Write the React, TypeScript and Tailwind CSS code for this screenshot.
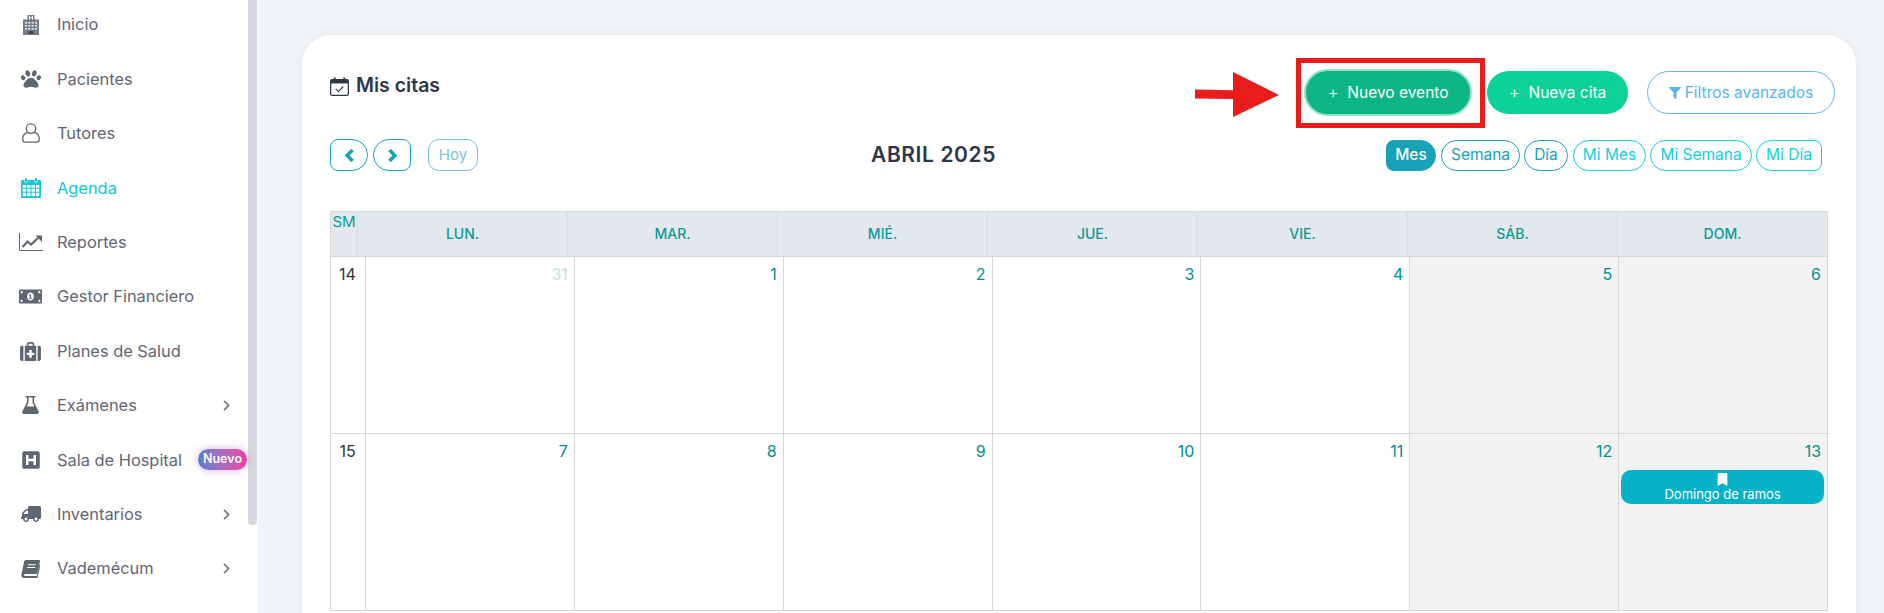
import React from 'react';
import {
  FaPaw,
  FaMoneyBillAlt,
  FaHSquare,
  FaTruck,
  FaFilter,
  FaBookmark,
} from 'react-icons/fa';
import { LuChevronRight } from 'react-icons/lu';

const gray = '#5f6673';

const HospitalIcon = () => (
  <svg viewBox="0 0 16 20" className="w-[16px] h-[20px]" fill="#757c87">
    <path d="M4.5 0h7v4.5H16V20H0V4.5h4.5z" />
    <path d="M6 1h1v1.2h2V1h1v3.4H9V3.2H7v1.2H6z" fill="#fff" />
    <g fill="#e8e9eb">
      <rect x="2" y="7" width="2" height="1.6" />
      <rect x="5.2" y="7" width="2" height="1.6" />
      <rect x="8.6" y="7" width="2" height="1.6" />
      <rect x="12" y="7" width="2" height="1.6" />
      <rect x="2" y="10" width="2" height="1.6" />
      <rect x="5.2" y="10" width="2" height="1.6" />
      <rect x="8.6" y="10" width="2" height="1.6" />
      <rect x="12" y="10" width="2" height="1.6" />
      <rect x="2" y="13" width="2" height="1.6" />
      <rect x="5.2" y="13" width="2" height="1.6" />
      <rect x="8.6" y="13" width="2" height="1.6" />
      <rect x="12" y="13" width="2" height="1.6" />
    </g>
    <rect x="5.5" y="16" width="5" height="3" fill="#3f4652" />
  </svg>
);

const UserIcon = () => (
  <svg viewBox="0 0 18 20" className="w-[18px] h-[20px]" fill="none" stroke={gray} strokeWidth="1.3">
    <circle cx="9" cy="5.6" r="4.7" />
    <path d="M5.6 9.4C2.6 10.4.8 12.6.8 15.6v1.2c0 1.3 1 2.4 2.4 2.4h11.6c1.4 0 2.4-1.1 2.4-2.4v-1.2c0-3-1.8-5.2-4.8-6.2" />
  </svg>
);

const AgendaIcon = () => (
  <svg viewBox="0 0 20 20" className="w-[20px] h-[20px]" fill="#12c6d6">
    <path d="M1.5 2H3.5V4.5h3V2h7v2.5h3V2h2c.8 0 1.5.7 1.5 1.5v15c0 .8-.7 1.5-1.5 1.5h-17C.7 20 0 19.3 0 18.5v-15C0 2.7.7 2 1.5 2z" />
    <path d="M4 .3h2v3.5H4zM14 .3h2v3.5h-2z" />
    <g fill="#fff">
      <rect x="1.7" y="7" width="3.3" height="2.8" />
      <rect x="5.9" y="7" width="3.6" height="2.8" />
      <rect x="10.5" y="7" width="3.6" height="2.8" />
      <rect x="15" y="7" width="3.3" height="2.8" />
      <rect x="1.7" y="10.7" width="3.3" height="3" />
      <rect x="5.9" y="10.7" width="3.6" height="3" />
      <rect x="10.5" y="10.7" width="3.6" height="3" />
      <rect x="15" y="10.7" width="3.3" height="3" />
      <rect x="1.7" y="14.7" width="3.3" height="3.5" />
      <rect x="5.9" y="14.7" width="3.6" height="3.5" />
      <rect x="10.5" y="14.7" width="3.6" height="3.5" />
      <rect x="15" y="14.7" width="3.3" height="3.5" />
    </g>
  </svg>
);

const ChartIcon = () => (
  <svg viewBox="0 0 24 18" className="w-[24px] h-[18px]" fill="none" stroke={gray}>
    <path d="M.5 0v17.5H24" strokeWidth="1" />
    <path d="M3.5 14l5-5.500 3.500 3 7-6.500" strokeWidth="2.2" />
    <path d="M16.500 2.500H23V9z" fill={gray} stroke="none" />
  </svg>
);

const MedkitIcon = () => (
  <svg viewBox="0 0 22 20" className="w-[21px] h-[19px]" fill={gray}>
    <path d="M7 5V2.500C7 1.100 8 0 9.500 0h3C14 0 15 1.100 15 2.500V5h-1.800V2.500c0-.4-.3-.7-.7-.7h-3c-.4 0-.7.3-.7.7V5z" />
    <path d="M5 4h12v16H5z" />
    <path d="M3.500 4v16H2c-1.100 0-2-.9-2-2V6c0-1.100.9-2 2-2zM18.500 4H20c1.100 0 2 .9 2 2v12c0 1.100-.9 2-2 2h-1.500z" />
    <path d="M9.700 8.500h2.600v2.700H15v2.600h-2.700v2.700H9.700v-2.700H7v-2.600h2.700z" fill="#fff" />
  </svg>
);

const FlaskIcon = () => (
  <svg viewBox="0 0 17 18" className="w-[17px] h-[18px]" fill={gray}>
    <path d="M3.500 0h10v1.500H12v4.800l4.700 9.300c.5 1.100-.2 2.400-1.500 2.400H1.800C.5 18-.2 16.700.3 15.600L5 6.300V1.500H3.500zM6.500 1.500v5.200L4.700 10.500h7.600L10.500 6.700V1.500z" />
  </svg>
);

const BookIcon = () => (
  <svg viewBox="0 0 19 18" className="w-[19px] h-[18px]" fill={gray}>
    <path d="M5 0h13.300c.5 0 .8.500.7 1l-2.800 12.300c-.1.500-.5.700-1 .7H4.500c-1.200 0-1.600.9-1.300 1.500.2.400.6.600 1 .6h11.600l2.700-11.800.5.400c.3.300.4.700.3 1.100l-2.600 11.500c-.1.400-.5.700-.9.700H3.300C1.400 18 0 16.600.4 14.500L3.200 1.600C3.400.7 4.100 0 5 0z" />
    <path d="M6.800 4.200h8v1.100h-8zM6.200 6.900h8V8h-8z" fill="#fff" />
  </svg>
);

const TitleIcon = () => (
  <svg viewBox="0 0 20 20" className="w-[19px] h-[19px]" fill="none" stroke="#2d3748">
    <rect x=".7" y="2.700" width="18.600" height="16.600" rx="1.500" strokeWidth="1.300" />
    <path d="M1 3h18v3.800H1z" fill="#2d3748" stroke="none" />
    <path d="M5 .5v4M15 .5v4" strokeWidth="2" />
    <path d="M6 12.500l2.800 2.800 5.200-5.300" strokeWidth="1.200" />
  </svg>
);

const NavChevron = ({ dir }: { dir: 'left' | 'right' }) => (
  <svg viewBox="0 0 9 13" className="w-[9px] h-[13px]" fill="none" stroke="#17a2b8" strokeWidth="3.600">
    <path d={dir === 'left' ? 'M7.500 1L2.200 6.500 7.500 12' : 'M1.500 1l5.300 5.500L1.500 12'} />
  </svg>
);

const menu = [
  { label: 'Inicio', icon: <HospitalIcon /> },
  { label: 'Pacientes', icon: <FaPaw size={20} /> },
  { label: 'Tutores', icon: <UserIcon /> },
  { label: 'Agenda', icon: <AgendaIcon />, active: true },
  { label: 'Reportes', icon: <ChartIcon /> },
  { label: 'Gestor Financiero', icon: <FaMoneyBillAlt size={23} /> },
  { label: 'Planes de Salud', icon: <MedkitIcon /> },
  { label: 'Exámenes', icon: <FlaskIcon />, arrow: true },
  { label: 'Sala de Hospital', icon: <FaHSquare size={20} />, badge: true },
  { label: 'Inventarios', icon: <FaTruck size={20} className="-scale-x-100" />, arrow: true },
  { label: 'Vademécum', icon: <BookIcon />, arrow: true },
];

const days = ['LUN.', 'MAR.', 'MIÉ.', 'JUE.', 'VIE.', 'SÁB.', 'DOM.'];

const weeks = [
  { num: 14, dates: ['31', '1', '2', '3', '4', '5', '6'] },
  { num: 15, dates: ['7', '8', '9', '10', '11', '12', '13'] },
];

const Sidebar = () => (
  <aside className="w-[258px] shrink-0 h-full bg-white flex overflow-hidden">
    <nav className="w-[248px] -mt-[2.5px] pl-[18px] pr-[8px]">
      {menu.map((item) => (
        <div key={item.label} className={`relative h-[54.4px] flex items-center ${item.active ? 'text-[#12c6d6]' : 'text-[#5f6673]'}`}>
          <span className="w-[39px] shrink-0 flex justify-center pr-[14px]">{item.icon}</span>
          <span className="text-[16.4px]">{item.label}</span>
          {item.arrow && <LuChevronRight className="ml-auto mr-[5px] text-[#5f6673]" size={17} strokeWidth={2.2} />}
          {item.badge && (
            <span className="ml-auto -mr-[7px] h-[21px] px-[5px] rounded-full bg-gradient-to-r from-[#4c7ed6] to-[#ee3aa4] text-white text-[12.5px] font-semibold flex items-center shadow-[0_0_8px_rgba(190,70,190,0.45)]">
              Nuevo
            </span>
          )}
        </div>
      ))}
    </nav>
    <div className="w-[9px] h-[525px] bg-[#d5d9dd] rounded-b-[4px]" />
  </aside>
);

const viewBtn = 'h-[31px] flex items-center justify-center border text-[15.5px]';

const Toolbar = () => (
  <div className="h-[32px] flex items-center justify-between">
    <div className="flex items-center">
      <button className="w-[38px] h-[32px] flex items-center justify-center border border-[#17a2b8] rounded-l-[8px] rounded-r-[16px]">
        <NavChevron dir="left" />
      </button>
      <button className="ml-[5px] w-[38px] h-[32px] flex items-center justify-center border border-[#17a2b8] rounded-r-[8px] rounded-l-[16px]">
        <NavChevron dir="right" />
      </button>
      <button className="ml-[17px] w-[50px] h-[32px] border border-[#74c7d6] rounded-[11px] text-[#74c7d6] text-[15px]">Hoy</button>
    </div>
    <div className="absolute left-[871px] font-semibold text-[#2d3748] text-[21px] tracking-[0.6px]">ABRIL 2025</div>
    <div className="flex items-center mr-[6px]">
      <button className={`${viewBtn} w-[50px] bg-[#17a2b8] border-[#17a2b8] text-white font-medium rounded-l-[8px] rounded-r-[16px]`}>Mes</button>
      <button className={`${viewBtn} ml-[5px] w-[79px] border-[#17a2b8] text-[#17a2b8] rounded-full`}>Semana</button>
      <button className={`${viewBtn} ml-[4px] w-[44px] border-[#17a2b8] text-[#17a2b8] rounded-full`}>Día</button>
      <button className={`${viewBtn} ml-[5px] w-[73px] border-[#12d0e0] text-[#12d0e0] rounded-full`}>Mi Mes</button>
      <button className={`${viewBtn} ml-[4px] w-[102px] border-[#12d0e0] text-[#12d0e0] rounded-full`}>Mi Semana</button>
      <button className={`${viewBtn} ml-[4px] w-[66px] border-[#12d0e0] text-[#12d0e0] rounded-l-[16px] rounded-r-[8px]`}>Mi Día</button>
    </div>
  </div>
);

const Calendar = () => (
  <div className="mt-[40px] w-[1498px] border-l border-[#d6d6d6]">
    <div className="flex h-[46px] bg-[#e2e8ee] border-y border-[#d6d6d6] text-[#0a9a96] text-[14px]">
      <div className="w-[27px] text-center text-[15px] leading-[20px] border-r border-[#d8dadc]">SM</div>
      {days.map((d) => (
        <div key={d} className="flex-1 flex items-center justify-center font-medium pb-[2px] border-r border-[#d8dadc]">
          {d}
        </div>
      ))}
    </div>
    {weeks.map((w) => (
      <div key={w.num} className="flex h-[177px] border-b border-[#d6d6d6]">
        <div className="w-[35px] shrink-0 text-center text-[#333] text-[16px] pt-[5px] pr-[1px] border-r border-[#d6d6d6]">{w.num}</div>
        {w.dates.map((date, i) => (
          <div key={date} className={`flex-1 border-r border-[#d6d6d6] ${i > 4 ? 'bg-[#f2f2f2]' : ''}`}>
            <div className={`text-right text-[16px] pr-[6px] pt-[5px] ${date === '31' ? 'text-[#bfe3de]' : 'text-[#008f8f]'}`}>{date}</div>
            {date === '13' && (
              <div className="ml-[2px] mr-[3px] mt-[7px] h-[34px] rounded-[10px] bg-[#06b2c7] text-white text-[13px] flex flex-col items-center justify-end pb-[1px] leading-[17px]">
                <FaBookmark size={13} />
                <span>Domingo de ramos</span>
              </div>
            )}
          </div>
        ))}
      </div>
    ))}
  </div>
);

export default function App() {
  return (
    <div className="relative w-[1884px] h-[613px] overflow-hidden flex bg-[#f1f5f8] font-['Inter',sans-serif]">
      <Sidebar />
      <main className="flex-1 pl-[44px] pr-[29px] pt-[35px]">
        <div className="h-[700px] bg-white rounded-[30px] shadow-[0_0_14px_rgba(0,0,0,0.06)] px-[28px] pt-[34px]">
          <div className="h-[47px] flex items-center justify-between -mr-[7px]">
            <div className="flex items-center gap-[7px] text-[#2d3748] -mt-[13px]">
              <TitleIcon />
              <span className="font-semibold text-[19.5px]">Mis citas</span>
            </div>
            <div className="flex items-center">
              <button className="w-[168px] h-[47px] rounded-full bg-[#0cb684] border-2 border-[#8ce6c6] text-white text-[15.5px]"><span className="text-[17px] font-light">+</span>&nbsp; Nuevo evento</button>
              <button className="ml-[15px] w-[141px] h-[43px] rounded-full bg-[#0dd298] text-white text-[15.5px]"><span className="text-[17px] font-light">+</span>&nbsp; Nueva cita</button>
              <button className="ml-[19px] w-[188px] h-[43px] rounded-full border border-[#63b7ee] text-[#56b5ee] text-[15.5px] flex items-center justify-center gap-[4px]">
                <FaFilter size={12} />
                Filtros avanzados
              </button>
            </div>
          </div>
          <div className="mt-[23px]">
            <Toolbar />
          </div>
          <Calendar />
        </div>
      </main>

      {/* annotation over the screenshot */}
      <div className="absolute left-[1296px] top-[58px] w-[189px] h-[70px] border-[5px] border-[#e91c1c]" />
      <svg className="absolute left-[1195px] top-[72px]" width="85" height="46" viewBox="0 0 85 46">
        <path d="M0 17.500l38 .8V0l46 23-46 22V27L0 26.500z" fill="#e91c1c" />
      </svg>
    </div>
  );
}
